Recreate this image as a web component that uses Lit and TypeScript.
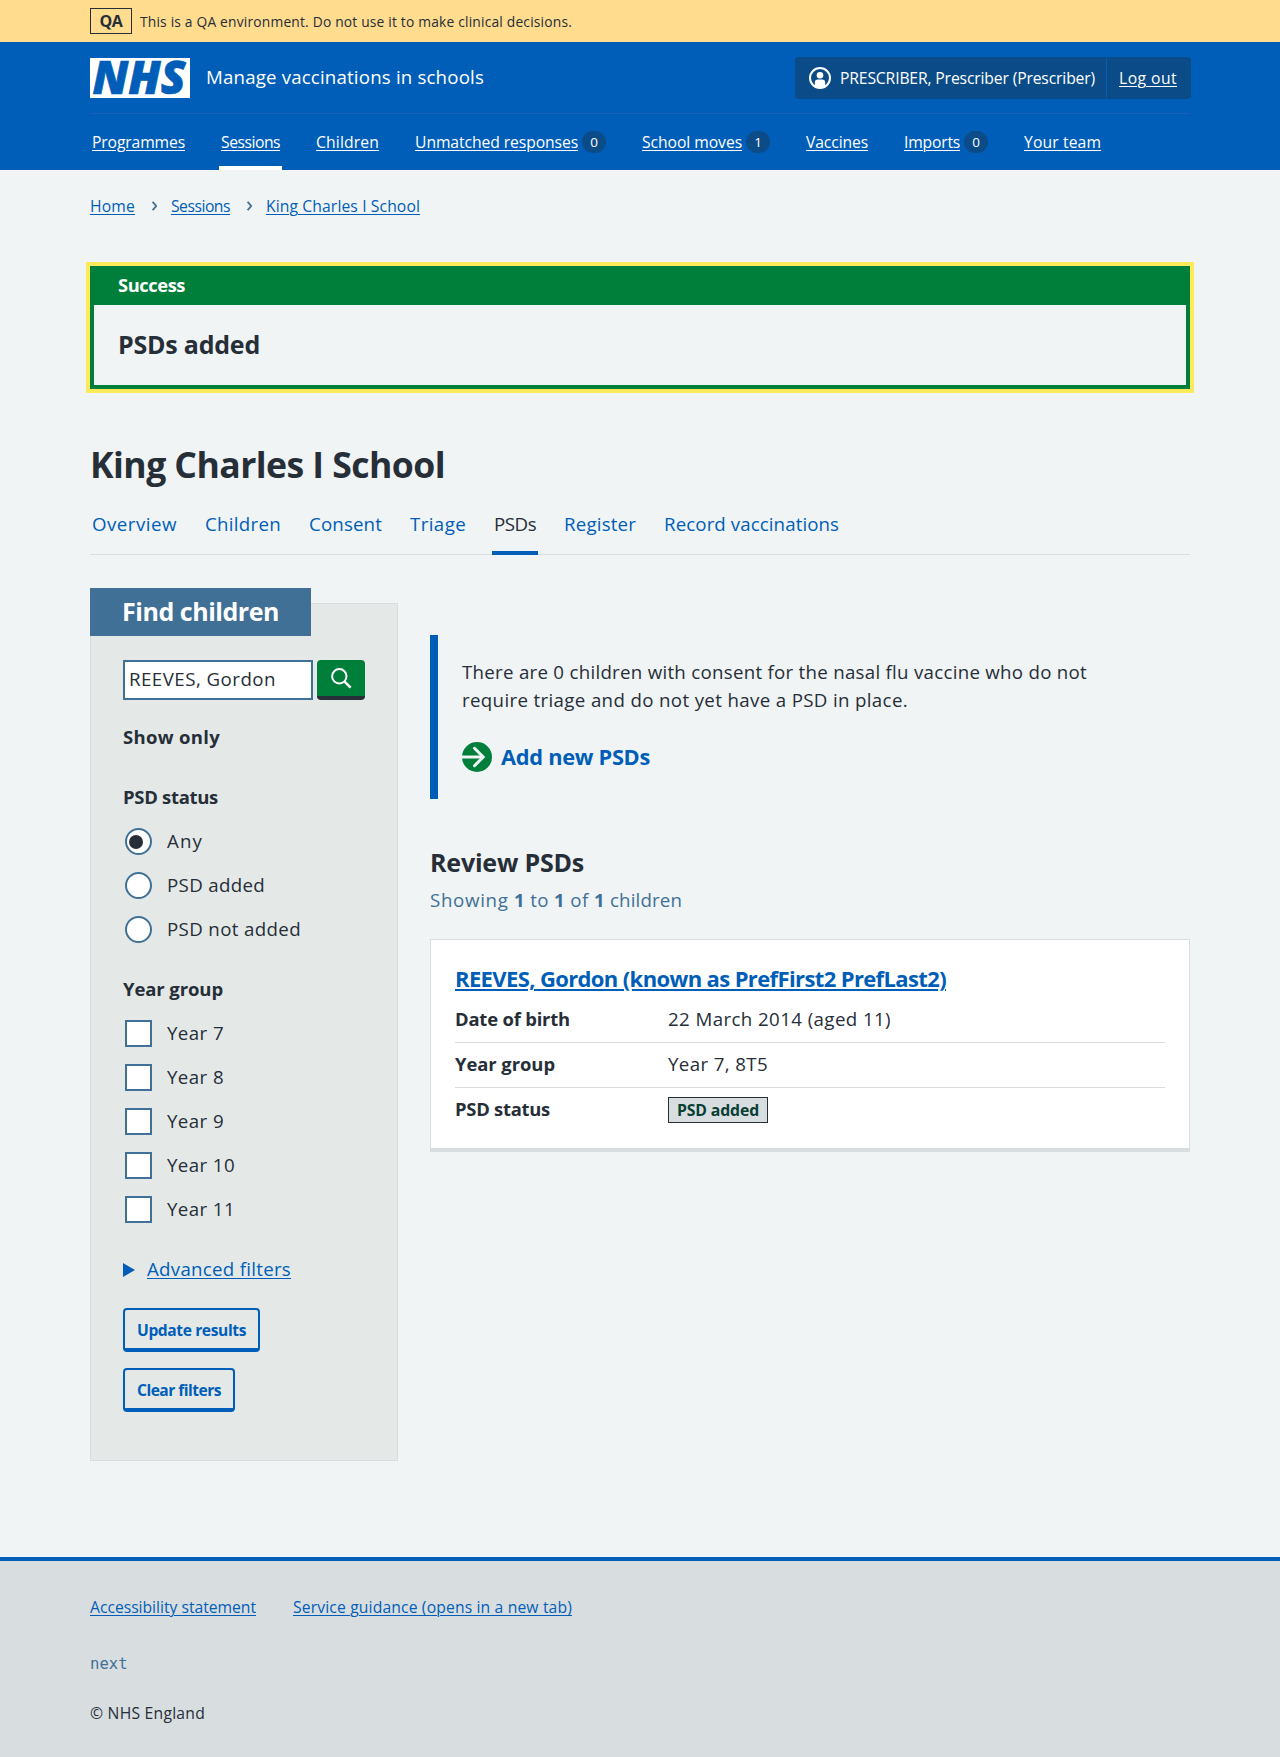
import { LitElement, html, css } from "lit";
import { customElement } from "lit/decorators.js";
import { classMap } from "lit/directives/class-map.js";
import { styleMap } from "lit/directives/style-map.js";

const FAMILY = '"Open Sans", "Noto Sans", sans-serif';
const ctx = document.createElement("canvas").getContext("2d")!;

/** Text tracked so that its advance is exactly `width` pixels. */
const fit = (text: string, width: number, size: number, weight = 400) => {
  ctx.font = `${weight} ${size}px ${FAMILY}`;
  const tracking = (width - ctx.measureText(text).width) / text.length;
  return html`<span
    class="t"
    style=${styleMap({
      fontSize: `${size}px`,
      fontWeight: `${weight}`,
      letterSpacing: `${tracking.toFixed(3)}px`,
    })}
    >${text}</span
  >`;
};

const S = 15.7;
const M = 18.7;
const BOLD = 660;

const NAV: { label: string; w: number; count?: string; active?: boolean }[] = [
  { label: "Programmes", w: 93 },
  { label: "Sessions", w: 59, active: true },
  { label: "Children", w: 63 },
  { label: "Unmatched responses", w: 163, count: "0" },
  { label: "School moves", w: 100, count: "1" },
  { label: "Vaccines", w: 62 },
  { label: "Imports", w: 56, count: "0" },
  { label: "Your team", w: 77 },
];

const TABS: [string, number][] = [
  ["Overview", 85],
  ["Children", 76],
  ["Consent", 73],
  ["Triage", 56],
  ["PSDs", 42],
  ["Register", 72],
  ["Record vaccinations", 175],
];

const STATUSES: [string, number][] = [
  ["Any", 36],
  ["PSD added", 98],
  ["PSD not added", 134],
];

const YEARS: [string, number][] = [
  ["Year 7", 57],
  ["Year 8", 57],
  ["Year 9", 57],
  ["Year 10", 68],
  ["Year 11", 68],
];

@customElement("app-root")
export class AppRoot extends LitElement {
  static styles = css`
    :host {
      display: block;
      min-height: 1757px;
      background: #f0f4f5;
      color: #262e38;
      font-family: "Open Sans", "Noto Sans", sans-serif;
      font-size: 18.7px;
      line-height: 28px;
    }
    * { box-sizing: border-box; }
    .t { display: block; white-space: pre; }
    .wrap { width: 1100px; margin: 0 auto; }
    h1, h2, h3, p, ul, dl, dd, dt { margin: 0; padding: 0; font-weight: inherit; }
    ul { list-style: none; }
    a { display: block; width: fit-content; color: #005eb8; text-decoration: underline; text-decoration-thickness: 1px; text-underline-offset: 2px; text-decoration-skip-ink: auto; }
    svg { display: block; flex: none; }

    .env { height: 42px; background: #ffdc8e; }
    .env .wrap { display: flex; align-items: center; height: 42px; gap: 8px; line-height: 20px; }
    .env-tag { display: flex; align-items: center; justify-content: center; width: 42px; height: 26px; border: 1px solid #262e38; }
    .env-text { padding-top: 1px; }

    header { height: 128px; background: #005eb8; color: #fff; }
    header a { color: #fff; }
    .brand { display: flex; align-items: center; height: 72px; border-bottom: 1px solid #1a61b9; }
    .logo { overflow: visible; }
    .service { margin-left: 16px; flex: 1; line-height: 28px; padding-bottom: 1px; }
    .account { display: flex; align-items: center; width: 396px; height: 42px; background: #0b4c88; border-radius: 4px; margin-right: -1px; line-height: 24px; }
    .user { display: flex; align-items: center; gap: 9px; width: 312px; height: 40px; padding-left: 14px; border-right: 1px solid #005eb8; }
    .logout { padding-left: 12px; }
    .nav { display: flex; gap: 32px; height: 56px; line-height: 24px; }
    .nav li { display: flex; align-items: center; gap: 4px; padding: 3px 2px 0; height: 56px; border-bottom: 4px solid transparent; }
    .nav .active { border-bottom-color: #fff; }
    .count { display: flex; align-items: center; justify-content: center; width: 24px; height: 22px; border-radius: 11px; background: #0b4c88; font-size: 13.5px; padding-top: 1px; }

    .crumbs { display: flex; align-items: center; padding-top: 24px; line-height: 24px; }
    .crumbs svg { margin: 0 14px 0 17px; }

    .banner { margin-top: 48px; height: 123px; border: 4px solid #007f3b; outline: 4px solid #ffeb59; }
    .banner-head { height: 35px; padding: 1px 24px 0; background: #007f3b; color: #fff; }
    .banner-body { padding: 23px 24px 0; line-height: 32px; }

    h1 { margin-top: 53px; line-height: 44px; }
    .tabs { display: flex; gap: 24px; height: 46px; margin-top: 23px; border-bottom: 1px solid #d8dde0; }
    .tabs li { height: 46px; padding: 1px 2px 0; border-bottom: 4px solid transparent; }
    .tabs a { color: #005eb8; text-decoration: none; }
    .tabs .active { border-bottom-color: #005eb8; }
    .tabs .active a { color: #262e38; }

    .cols { display: flex; align-items: flex-start; gap: 32px; }
    .panel { width: 308px; height: 858px; margin-top: 48px; border: 1px solid #d8dde0; background: #e4e9e8; padding: 0 32px; }
    .panel h2 { width: 221px; height: 48px; margin: -16px 0 0 -33px; padding: 7px 0 0 32px; background: #407096; color: #fff; line-height: 32px; }
    .search { display: flex; gap: 4px; margin-top: 24px; }
    .field { width: 190px; height: 40px; border: 2px solid #407096; background: #fff; padding: 3px 4px; }
    .go { display: flex; justify-content: center; width: 48px; height: 40px; padding-top: 7px; border-radius: 4px; background: #007f3b; border-bottom: 4px solid #262e38; }
    .only { margin-top: 23px; }
    .group { margin-top: 32px; }
    .opts { display: flex; flex-direction: column; gap: 16px; margin-top: 16px; }
    .opt { display: flex; gap: 15px; height: 28px; padding-left: 2px; }
    .box { width: 27px; height: 27px; margin-top: 1px; border: 2px solid #407096; background: #fff; flex: none; }
    .round { display: flex; align-items: center; border-radius: 50%; padding-left: 2px; }
    .dot { width: 14px; height: 14px; border-radius: 50%; background: #262e38; }
    .more { display: flex; align-items: center; gap: 12px; margin-top: 32px; }
    .more svg { margin-top: 2px; }
    .btn { display: flex; justify-content: center; height: 44px; padding-top: 8px; border: 2px solid #005eb8; border-bottom-width: 4px; border-radius: 4px; color: #005eb8; line-height: 24px; }
    .update { width: 137px; margin-top: 25px; }
    .clear { width: 112px; margin-top: 16px; }

    .main { width: 760px; }
    .inset { height: 164px; margin-top: 80px; padding: 23px 24px; border-left: 8px solid #005eb8; }
    .action { display: flex; align-items: center; gap: 9px; margin-top: 26px; height: 32px; color: #005eb8; padding-top: 2px; }
    .review { margin-top: 47px; line-height: 32px; }
    .showing { display: flex; color: #407096; margin-top: 8px; }
    .card { height: 213px; margin-top: 25px; padding: 24px; border: 1px solid #d8dde0; border-bottom-width: 4px; background: #fff; }
    .card h3 a { text-decoration-thickness: 2px; }
    .row { display: flex; height: 45px; padding-top: 7px; border-bottom: 1px solid #d8dde0; }
    .row:first-of-type { height: 51px; padding-top: 13px; }
    .row:last-of-type { border-bottom: 0; }
    dt { width: 213px; }
    .tag { display: flex; align-items: center; width: 100px; height: 26px; padding-left: 8px; border: 1px solid #262e38; background: #d8dde0; color: #0a3f33; line-height: 24px; margin-top: 2px; }

    footer { height: 200px; margin-top: 96px; border-top: 4px solid #005eb8; background: #d8dde0; line-height: 24px; }
    .links { display: flex; gap: 37px; padding-top: 34px; }
    .ver { margin-top: 33px; font-family: "DejaVu Sans Mono", monospace; font-size: 15.6px; color: #407096; }
    .copy { margin-top: 25px; }
  `;

  private chevron = html`<svg width="5" height="10" viewBox="0 0 5 10">
    <path d="M.6.8 4.2 5 .6 9.2" fill="none" stroke="#407096" stroke-width="1.9" />
  </svg>`;

  private option([label, w]: [string, number], i: number, round: boolean) {
    return html`<label class="opt">
      <span class=${classMap({ box: true, round })}>${round && i === 0 ? html`<span class="dot"></span>` : ""}</span>
      ${fit(label, w, M)}
    </label>`;
  }

  render() {
    return html`
      <div class="env">
        <div class="wrap">
          <span class="env-tag">${fit("QA", 23, 16, BOLD)}</span>
          <span class="env-text">${fit("This is a QA environment. Do not use it to make clinical decisions.", 432, 13.8)}</span>
        </div>
      </div>
      <header>
        <div class="wrap">
          <div class="brand">
            <svg class="logo" width="100" height="40" viewBox="0 0 100 40" role="img" aria-label="NHS">
              <rect width="100" height="40" fill="#fff" />
              <text x="2.500" y="36.300" font-family="Open Sans" font-weight="800" font-style="italic" font-size="46" textLength="93" lengthAdjust="spacingAndGlyphs" fill="#005eb8" stroke="#005eb8" stroke-width=".7">NHS</text>
            </svg>
            <span class="service">${fit("Manage vaccinations in schools", 278, M)}</span>
            <div class="account">
              <div class="user">
                <svg width="22" height="22" viewBox="0 0 22 22">
                  <circle cx="11" cy="11" r="10" fill="none" stroke="#fff" stroke-width="2" />
                  <circle cx="11" cy="8.2" r="3.3" fill="#fff" />
                  <path d="M5.800 19v-3.200a3.200 3.200 0 0 1 3.200-3.200h4a3.200 3.200 0 0 1 3.200 3.200V19L11 21z" fill="#fff" />
                </svg>
                ${fit("PRESCRIBER, Prescriber (Prescriber)", 255, S)}
              </div>
              <a class="logout">${fit("Log out", 58, S)}</a>
            </div>
          </div>
          <ul class="nav">
            ${NAV.map(
              (n) => html`<li class=${classMap({ active: !!n.active })}>
                <a>${fit(n.label, n.w, S)}</a>${n.count ? html`<span class="count">${n.count}</span>` : ""}
              </li>`
            )}
          </ul>
        </div>
      </header>
      <div class="wrap">
        <nav class="crumbs">
          <a>${fit("Home", 45, S)}</a>${this.chevron}<a>${fit("Sessions", 59, S)}</a>${this.chevron}<a
            >${fit("King Charles I School", 154, S)}</a
          >
        </nav>
        <section class="banner">
          <div class="banner-head">${fit("Success", 67, 18.3, BOLD)}</div>
          <div class="banner-body">${fit("PSDs added", 142, 25, BOLD)}</div>
        </section>
        <h1>${fit("King Charles I School", 355, 35.6, BOLD)}</h1>
        <ul class="tabs">
          ${TABS.map(([l, w]) => html`<li class=${classMap({ active: l === "PSDs" })}><a>${fit(l, w, M)}</a></li>`)}
        </ul>
        <div class="cols">
          <aside class="panel">
            <h2>${fit("Find children", 157, 25, BOLD)}</h2>
            <div class="search">
              <div class="field">${fit("REEVES, Gordon", 147, M)}</div>
              <div class="go">
                <svg width="22" height="22" viewBox="0 0 22 22" fill="none" stroke="#fff" stroke-width="2">
                  <circle cx="9.300" cy="9.300" r="7.200" />
                  <path d="m14.300 14.300 6.400 6.400" stroke-width="2.500" />
                </svg>
              </div>
            </div>
            <div class="only">${fit("Show only", 97, 18.5, BOLD)}</div>
            <div class="group">${fit("PSD status", 95, 18.5, BOLD)}</div>
            <div class="opts">${STATUSES.map((o, i) => this.option(o, i, true))}</div>
            <div class="group">${fit("Year group", 100, 18.5, BOLD)}</div>
            <div class="opts">${YEARS.map((o, i) => this.option(o, i, false))}</div>
            <div class="more">
              <svg width="12" height="14" viewBox="0 0 12 14"><path d="M0 0l12 7-12 7z" fill="#005eb8" /></svg>
              <a>${fit("Advanced filters", 144, M)}</a>
            </div>
            <div class="btn update">${fit("Update results", 109, 15.6, BOLD)}</div>
            <div class="btn clear">${fit("Clear filters", 84, 15.6, BOLD)}</div>
          </aside>
          <main class="main">
            <div class="inset">
              <p>
                ${fit("There are 0 children with consent for the nasal flu vaccine who do not", 625, M)}
                ${fit("require triage and do not yet have a PSD in place.", 446, M)}
              </p>
              <div class="action">
                <svg width="30" height="30" viewBox="0 0 30 30">
                  <circle cx="15" cy="15" r="15" fill="#007f3b" />
                  <g fill="none" stroke="#f0f4f5" stroke-width="3">
                    <path d="M0 15h20.500" />
                    <path d="m12.500 6.300 8.700 8.700-8.700 8.700" stroke-linecap="round" />
                  </g>
                </svg>
                ${fit("Add new PSDs", 149, 21.8, BOLD)}
              </div>
            </div>
            <h2 class="review">${fit("Review PSDs", 154, 25, BOLD)}</h2>
            <p class="showing">
              ${fit("Showing ", 84, M)}${fit("1", 11, 18.5, 700)}${fit(" to ", 29, M)}${fit("1", 11, 18.5, 700)}${fit(" of ", 29, M)}${fit("1", 11, 18.5, 700)}${fit(" children", 77, M)}
            </p>
            <section class="card">
              <h3><a>${fit("REEVES, Gordon (known as PrefFirst2 PrefLast2)", 491, 22, BOLD)}</a></h3>
              <dl>
                <div class="row"><dt>${fit("Date of birth", 115, 18.4, BOLD)}</dt><dd>${fit("22 March 2014 (aged 11)", 223, M)}</dd></div>
                <div class="row"><dt>${fit("Year group", 100, 18.4, BOLD)}</dt><dd>${fit("Year 7, 8T5", 100, M)}</dd></div>
                <div class="row"><dt>${fit("PSD status", 95, 18.4, BOLD)}</dt><dd class="tag">${fit("PSD added", 82, 15.8, BOLD)}</dd></div>
              </dl>
            </section>
          </main>
        </div>
      </div>
      <footer>
        <div class="wrap">
          <div class="links">
            <a>${fit("Accessibility statement", 166, S)}</a><a>${fit("Service guidance (opens in a new tab)", 279, S)}</a>
          </div>
          <div class="ver">next</div>
          <div class="copy">${fit("© NHS England", 115, S)}</div>
        </div>
      </footer>
    `;
  }
}
